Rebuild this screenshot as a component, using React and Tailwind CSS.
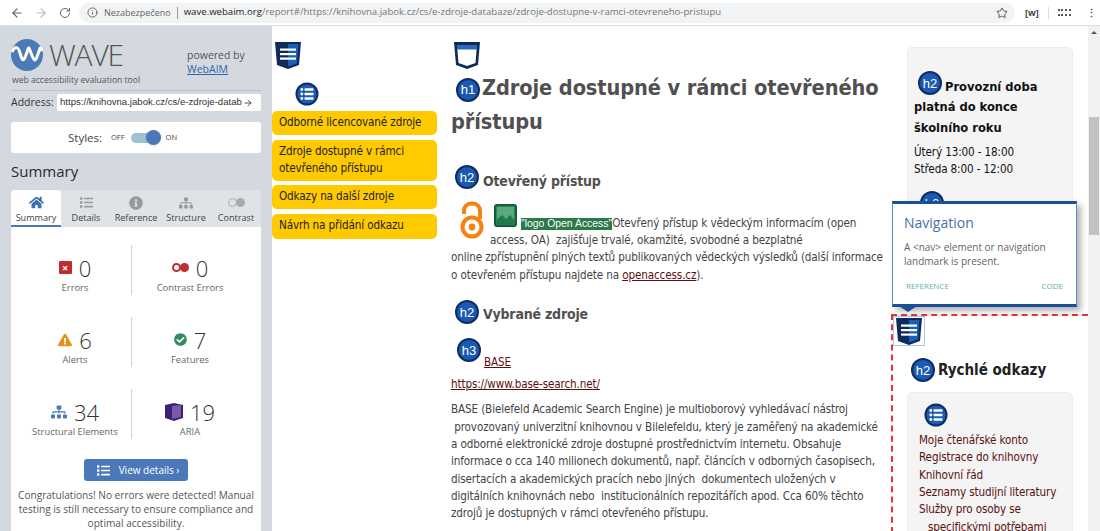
import React from "react";
import { ArrowLeft, ArrowRight, RotateCw, Info, Star, ArrowRight as Go } from "lucide-react";
import { FaHome, FaList, FaInfoCircle, FaSitemap, FaCheckCircle, FaExclamationTriangle } from "react-icons/fa";

const Shield = ({ kind = "nav", className = "" }) => (
  <svg viewBox="0 0 26 27" className={"w-[26px] h-[27px] shrink-0 " + className}>
    <path d="M0 0H26L24 23L13 27L2 23Z" fill="#0f2a5c" />
    {kind === "nav" ? (
      <>
        <path d="M13 2H23.5L21.8 21.5L13 24.5Z" fill="#1b5fb5" />
        <rect x="5" y="6.5" width="16" height="2.2" fill="#fff" />
        <rect x="5" y="11" width="16" height="2.2" fill="#fff" />
        <rect x="5" y="15.5" width="16" height="2.2" fill="#fff" />
      </>
    ) : (
      <>
        <path d="M3 3H23L21.5 21L13 24L4.5 21Z" fill="#fff" />
        <rect x="3" y="3" width="20" height="4.5" fill="#2c68b5" />
      </>
    )}
  </svg>
);

const ListBadge = ({ className = "" }) => (
  <svg viewBox="0 0 24 24" className={"w-[24px] h-[24px] shrink-0 " + className}>
    <circle cx="12" cy="12" r="11.5" fill="#0c2d66" />
    <circle cx="12" cy="12" r="9.5" fill="#1c5db0" />
    {[7.5, 12, 16.5].map((y) => (
      <g key={y} fill="#fff">
        <circle cx="6.8" cy={y} r="1.4" />
        <rect x="9.5" y={y - 1.2} width="9" height="2.4" rx="0.6" />
      </g>
    ))}
  </svg>
);

const H = ({ n, className = "" }) => (
  <span className={"inline-flex w-[24px] h-[24px] rounded-full bg-[#1a5ab0] border-2 border-[#0c2d66] items-center justify-center text-white text-[13px] tracking-normal font-['Liberation_Sans',sans-serif] font-normal leading-none shrink-0 " + className}>
    h{n}
  </span>
);

const Stat = ({ icon, n, label, className = "" }) => (
  <div className={"flex flex-col items-center h-[50px] shrink-0 pt-[9px] " + className}>
    <div className="flex items-center gap-[7px] h-[30px]">
      {icon}
      <span className="text-[22px] leading-none text-[#333] font-light">{n}</span>
    </div>
    <div className="text-[9.4px] leading-[14px] text-[#666] mt-[0px] whitespace-nowrap">{label}</div>
  </div>
);

const Row = ({ a, b }) => (
  <div className="flex mb-[22px]">
    {a}
    <div className="w-px h-[50px] bg-[#d4d4d4] shrink-0" />
    {b}
  </div>
);

const Tab = ({ icon, label, active }) => (
  <div className={"w-[50px] h-[37px] flex flex-col items-center pt-[5px] text-[9.1px] leading-[12px] whitespace-nowrap " + (active ? "bg-white rounded-t-[4px] border-b-2 border-[#4a78b8] text-[#444]" : "text-[#444]")}>
    <div className="h-[15px] mb-[2px] flex items-center">{icon}</div>
    {label}
  </div>
);

const L = "w-[120px] pl-[8px]";
const R = "w-[116px]";

const Sidebar = () => (
  <aside className="w-[272px] shrink-0 bg-[#d4d9df] px-[11px] h-full overflow-hidden font-['Open_Sans',sans-serif]">
    <div className="flex pt-[12px] h-[65px] border-b border-[#bcc2c9]">
      <div className="w-[176px]">
        <div className="flex items-center h-[33px]">
          <svg viewBox="0 0 32 32" className="w-[32px] h-[32px] shrink-0">
            <circle cx="16" cy="16" r="16" fill="#4a7ab8" />
            <path d="M1 13C4 7 7 7 9 14S12 24 15 16S17 6 20 14S24 24 27 15S29 9 31 12" stroke="#fff" strokeWidth="3" fill="none" />
          </svg>
          <span className="ml-[6px] text-[30px] leading-none font-light text-[#555] tracking-[-1.2px]">WAVE</span>
        </div>
        <div className="text-[8.6px] leading-[12px] text-[#555] mt-[3px] ml-px whitespace-nowrap">web accessibility evaluation tool</div>
      </div>
      <div className="text-[10.5px] leading-[14px] text-[#555] mt-[10px]">
        powered by
        <br />
        <span className="text-[#2f66b0] underline">WebAIM</span>
      </div>
    </div>
    <div className="flex items-center mt-[3px] h-[17px]">
      <span className="text-[10.5px] text-[#333] w-[46px]">Address:</span>
      <div className="w-[204px] h-[17px] bg-white rounded-[2px] flex items-center pl-[3px] pr-[8px] text-[9.6px] text-[#333] font-['Liberation_Sans',sans-serif] whitespace-nowrap overflow-hidden justify-between">
        <span>https://knihovna.jabok.cz/cs/e-zdroje-datab</span>
        <Go size={10} className="shrink-0" />
      </div>
    </div>
    <div className="h-[31px] mt-[11px] bg-white rounded-[3px] flex items-center pl-[57px] text-[#444]">
      <span className="text-[11.5px] mr-[9px]">Styles:</span>
      <span className="text-[7.5px] mr-[6px]">OFF</span>
      <span className="relative w-[30px] h-[10px] rounded-full bg-[#9ec2cf] mr-[4px]">
        <span className="absolute right-0 top-[-3px] w-[15px] h-[15px] rounded-full bg-[#4a78b8] shadow" />
      </span>
      <span className="text-[7.5px] ml-[1px]">ON</span>
    </div>
    <div className="text-[15px] leading-[22px] text-[#2a2a2a] mt-[7px] mb-[8px]">Summary</div>
    <div className="flex bg-[#dfe3e7] rounded-t-[4px] h-[37px]">
      <Tab active icon={<FaHome size={15} color="#3f6fb0" />} label="Summary" />
      <Tab icon={<FaList size={13} color="#999" />} label="Details" />
      <Tab icon={<FaInfoCircle size={14} color="#999" />} label="Reference" />
      <Tab icon={<FaSitemap size={14} color="#999" />} label="Structure" />
      <Tab
        icon={
          <span className="flex">
            <span className="w-[9px] h-[9px] rounded-full border border-[#aaa]" />
            <span className="w-[9px] h-[9px] rounded-full bg-[#aaa] -ml-px" />
          </span>
        }
        label="Contrast"
      />
    </div>
    <div className="bg-white h-[320px] pt-[18px]">
      <Row
        a={<Stat className={L} label="Errors" n="0" icon={<span className="w-[13px] h-[13px] bg-[#bf2c32] text-white text-[11px] leading-[13px] text-center font-bold rounded-[1px]">×</span>} />}
        b={<Stat className={R} label="Contrast Errors" n="0" icon={<span className="flex items-center"><span className="w-[9px] h-[9px] rounded-full border-2 border-[#bf2c32]" /><span className="w-[9px] h-[9px] rounded-full bg-[#bf2c32] -ml-px" /></span>} />}
      />
      <Row
        a={<Stat className={L} label="Alerts" n="6" icon={<FaExclamationTriangle size={14} color="#e8901c" />} />}
        b={<Stat className={R} label="Features" n="7" icon={<FaCheckCircle size={13} color="#2f8a5f" />} />}
      />
      <Row
        a={<Stat className={L} label="Structural Elements" n="34" icon={<FaSitemap size={16} color="#4a78b8" />} />}
        b={<Stat className={R} label="ARIA" n="19" icon={<svg viewBox="0 0 18 18" className="w-[18px] h-[18px]"><path d="M0 2L9 0L18 2V15L9 18L0 15Z" fill="#3f2075" /><path d="M7 3L16 2V14L7 16Z" fill="#7a5aa8" /></svg>} />}
      />
      <div className="w-[104px] h-[22px] mx-auto bg-[#4a78b8] rounded-[3px] flex items-center justify-center gap-[9px] pl-[4px] text-white text-[10px] -mt-[2px]">
        <FaList size={13} />
        <span>View details ›</span>
      </div>
      <p className="text-[10.1px] leading-[14px] text-[#555] text-center mt-[7px] px-[4px]">
        Congratulations! No errors were detected! Manual testing is still necessary to ensure compliance and optimal accessibility.
      </p>
    </div>
  </aside>
);

const navItems = [
  ["Odborné licencované zdroje", "h-[24px]"],
  ["Zdroje dostupné v rámci otevřeného přístupu", "h-[41px]"],
  ["Odkazy na další zdroje", "h-[24px]"],
  ["Návrh na přidání odkazu", "h-[25px]"],
];

const font = "font-['DejaVu_Sans_Condensed','DejaVu_Sans',sans-serif]";
const body = "text-[11.6px] leading-[17.35px] tracking-[-0.127px]";

const NavCol = () => (
  <div className="w-[165px] shrink-0 pt-[16px]">
    <Shield className="ml-[3px]" />
    <ListBadge className="ml-[23px] mt-[13px]" />
    <div className="mt-[5px] flex flex-col gap-[4.5px]">
      {navItems.map(([t, h]) => (
        <div key={t} className={"bg-[#ffcb00] rounded-[5px] px-[7px] flex items-center text-[#222] " + body + " " + h}>
          {t}
        </div>
      ))}
    </div>
  </div>
);

const MainCol = () => (
  <div className={"w-[434px] ml-[14px] shrink-0 pt-[16px] text-[#444] " + body}>
    <Shield kind="header" className="ml-[3px]" />
    <h1 className="text-[21.6px] leading-[34px] tracking-[-0.1px] font-bold text-[#505050] mt-[2px] whitespace-nowrap">
      <H n={1} className="mr-[2px] ml-[5px] align-[1px]" />
      Zdroje dostupné v rámci otevřeného
      <br />
      přístupu
    </h1>
    <h2 className="flex items-start text-[14px] tracking-[-0.2px] font-bold text-[#505050] mt-[26px] h-[26px]">
      <H n={2} className="ml-[4px] mr-[4px]" />
      <span className="mt-[8px]">Otevřený přístup</span>
    </h2>
    <div className="mt-[21px]">
      <svg viewBox="0 0 24 38" className="float-left w-[24px] h-[38px] -mt-[11px] ml-[9px] mr-[6px]">
        <circle cx="12" cy="26" r="9.5" stroke="#f68212" strokeWidth="4" fill="none" />
        <circle cx="12" cy="26" r="3.4" fill="#f68212" />
        <path d="M4 13V10C4 0 20 0 20 10V18" stroke="#f68212" strokeWidth="4" fill="none" />
      </svg>
      <div className="whitespace-nowrap h-[20px] flex items-end">
        <svg viewBox="0 0 23 23" className="w-[23px] h-[23px] ml-[4px] mr-[4px] shrink-0 relative top-[-5px]">
          <rect width="23" height="23" rx="3" fill="#10603b" />
          <rect x="2.5" y="2.5" width="18" height="18" fill="#5aa87d" />
          <path d="M2.5 20.5V16L8 11L12 15L16 11L20.5 16V20.5Z" fill="#1f7a4c" />
        </svg>
        <span>
          <span className="bg-[#2a7a4a] text-white text-[10.4px] leading-[12px] tracking-normal font-['Liberation_Sans',sans-serif] inline-block">"logo Open Access"</span>
          Otevřený přístup k vědeckým informacím (open
        </span>
      </div>
      <p className="whitespace-nowrap">
        access, OA)&nbsp; zajišťuje trvalé, okamžité, svobodné a bezplatné
        <br />
        online zpřístupnění plných textů publikovaných vědeckých výsledků (další informace
        <br />o otevřeném přístupu najdete na <span className="underline text-[#5a1010]">openaccess.cz</span>).
      </p>
    </div>
    <h2 className="flex items-start text-[14px] tracking-[-0.2px] font-bold text-[#505050] mt-[16px] h-[26px]">
      <H n={2} className="ml-[4px] mr-[4px]" />
      <span className="mt-[6px]">Vybrané zdroje</span>
    </h2>
    <div className="flex items-start mt-[12px] h-[31px] text-[#5a1010]">
      <H n={3} className="ml-[6px] mr-[3px]" />
      <span className="underline mt-[16px]">BASE</span>
    </div>
    <p className="mt-[7px] underline text-[#5a1010]">https://www.base-search.net/</p>
    <p className="mt-[8px] whitespace-nowrap">
      BASE (Bielefeld Academic Search Engine) je multioborový vyhledávací nástroj
      <br />
      &nbsp;provozovaný univerzitní knihovnou v Bilelefeldu, který je zaměřený na akademické
      <br />
      a odborné elektronické zdroje dostupné prostřednictvím internetu. Obsahuje
      <br />
      informace o cca 140 milionech dokumentů, např. článcích v odborných časopisech,
      <br />
      disertacích a akademických pracích nebo jiných&nbsp; dokumentech uložených v
      <br />
      digitálních knihovnách nebo&nbsp; institucionálních repozitářích apod. Cca 60% těchto
      <br />
      zdrojů je dostupných v rámci otevřeného přístupu.
    </p>
  </div>
);

const Tooltip = () => (
  <div className="absolute left-[-15px] top-[175px] w-[185px] h-[106px] bg-white border-x border-[#5f8ac4] border-t-[3px] border-b-[3px] border-t-[#1a5196] border-b-[#1a5196] shadow-[4px_4px_6px_rgba(0,0,0,0.3)] px-[11px] pt-[9px] font-['Open_Sans',sans-serif] tracking-normal z-10">
    <div className="text-[14px] leading-[20px] text-[#4a70a8]">Navigation</div>
    <div className="text-[10px] leading-[14px] text-[#666] mt-[7px]">
      A &lt;nav&gt; element or navigation landmark is present.
    </div>
    <div className="flex justify-between text-[8px] leading-[12px] text-[#5fb0a8] mt-[12px] px-[2px]">
      <span>REFERENCE</span>
      <span>CODE</span>
    </div>
    <div className="absolute left-[3px] top-[100px] w-0 h-0 border-x-[12px] border-x-transparent border-t-[8px] border-t-[#1a5196]" />
  </div>
);

const RightCol = () => (
  <div className="relative ml-[22px] w-[181px] shrink-0 pt-[21px] text-[#111]">
    <div className="w-[166px] h-[242px] bg-[#f4f4f4] border border-[#ececec] rounded-[5px] px-[6px] pt-[23px] overflow-hidden">
      <div className="text-[12.8px] leading-[20.7px] font-bold">
        <H n={2} className="ml-[4px] mr-[3px] align-[3px]" />
        Provozní doba platná do konce školního roku
      </div>
      <div className={"mt-[5px] " + body}>
        Úterý 13:00 - 18:00
        <br />
        Středa 8:00 - 12:00
      </div>
      <H n={2} className="ml-[6px] mt-[13px]" />
    </div>
    <Tooltip />
    <div className="-ml-[16px] mt-[25px] w-[197px] h-[300px] border-t-2 border-l-2 border-dashed border-t-[#f03030] border-l-[#f03030]">
      <div className="w-[32px] h-[30px] border border-[#a9c4ee] flex items-center justify-center">
        <Shield />
      </div>
      <h2 className="flex items-center text-[15px] font-bold text-[#222] mt-[12px] ml-[18px] h-[24px]">
        <H n={2} className="mr-[3px]" />
        Rychlé odkazy
      </h2>
      <div className={"ml-[14px] mt-[10px] w-[166px] h-[200px] bg-[#f4f4f4] border border-[#ececec] rounded-[5px] px-[11px] pt-[10px] text-[#5a1010] " + body}>
        <ListBadge className="ml-[5px] mb-[5px]" />
        Moje čtenářské konto
        <br />
        Registrace do knihovny
        <br />
        Knihovní řád
        <br />
        Seznamy studijní literatury
        <br />
        Služby pro osoby se
        <br />
        <span className="pl-[9px]">specifickými potřebami</span>
      </div>
    </div>
  </div>
);

export default function App() {
  return (
    <div className="w-[1100px] h-[531px] overflow-hidden bg-white flex flex-col">
      <header className="h-[26px] shrink-0 bg-white border-b border-[#dcdcdc] flex items-center text-[#5f6368] font-['Open_Sans',sans-serif]">
        <ArrowLeft size={14} className="ml-[10px]" />
        <ArrowRight size={14} className="ml-[10px] text-[#bbb]" />
        <RotateCw size={12} className="ml-[11px]" />
        <div className="ml-[8px] w-[936px] h-[20px] rounded-full bg-[#f1f3f4] flex items-center pl-[8px] text-[9.6px] whitespace-nowrap overflow-hidden">
          <Info size={11} className="mr-[6px]" />
          <span className="text-[#666] text-[9px]">Nezabezpečeno</span>
          <span className="mx-[6px] w-px h-[12px] bg-[#999]" />
          <span className="text-[#222]">wave.webaim.org</span>
          <span className="text-[#777]">/report#/https://knihovna.jabok.cz/cs/e-zdroje-databaze/zdroje-dostupne-v-ramci-otevreneho-pristupu</span>
          <Star size={12} className="ml-auto mr-[7px] text-[#555]" />
        </div>
        <span className="ml-[10px] text-[9px] font-bold text-[#444] w-[14px]">[w]</span>
        <span className="ml-[9px] w-px h-[12px] bg-[#ddd]" />
        <span className="ml-[9px] w-[13px] h-[7px] border-y-2 border-dotted border-[#555]" />
        <span className="ml-[15px] text-[11px] leading-none font-bold">⋮</span>
      </header>
      <div className="flex flex-1 min-h-0">
        <Sidebar />
        <main className={"flex flex-1 min-w-0 overflow-hidden " + font}>
          <NavCol />
          <MainCol />
          <RightCol />
        </main>
        <div className="w-[12px] shrink-0 bg-[#f1f1f1] flex flex-col items-center">
          <span className="mt-[5px] w-0 h-0 border-x-[3px] border-x-transparent border-b-[3px] border-b-[#555]" />
          <span className="mt-[83px] w-[10px] h-[118px] bg-[#c1c1c1]" />
        </div>
      </div>
    </div>
  );
}
